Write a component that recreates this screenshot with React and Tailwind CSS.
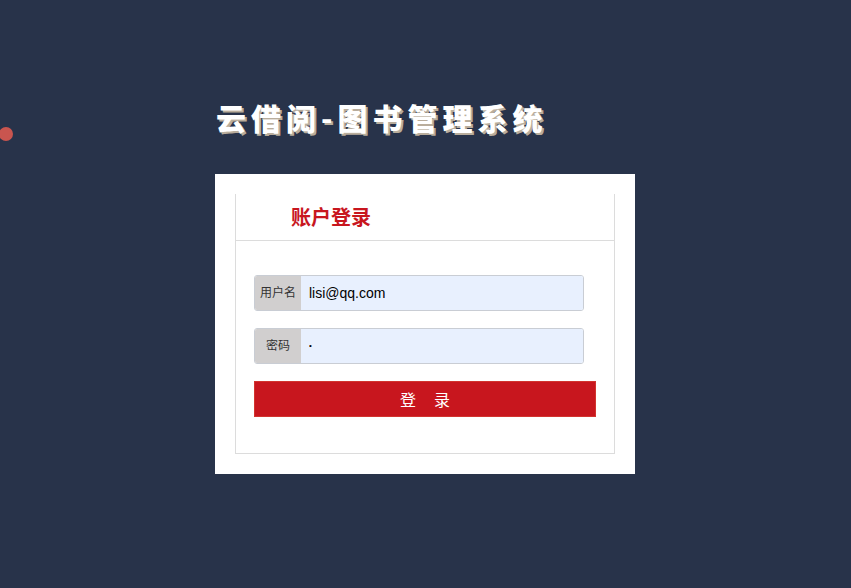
import React from 'react';

const cjk = { fontFamily: '"Noto Sans CJK SC", "Liberation Sans", sans-serif' };

const Field = ({ label, type, value, small }) => (
  <div className="flex h-[36px] w-[330px] rounded-[3px] border border-[#c9cdd4] overflow-hidden">
    <div
      className="w-[46px] shrink-0 bg-[#d1cfcf] text-[12px] text-[#333] flex justify-center pt-[7px]"
      style={cjk}
    >
      {label}
    </div>
    <input
      type={type}
      defaultValue={value}
      className={`flex-1 bg-[#e8f0fe] pl-[8px] text-black outline-none ${small ? 'text-[8px]' : 'text-[14px]'}`}
      style={{ fontFamily: '"Liberation Sans", Arial, sans-serif' }}
    />
  </div>
);

export default function App() {
  return (
    <div className="relative min-h-[588px] w-full bg-[#28334a] flex flex-col items-center pt-[97px]">
      {/* decorative dot on the left edge */}
      <div className="absolute left-[-1px] top-[127px] h-[14px] w-[14px] rounded-full bg-[#c9554f]" />

      <div className="w-[421px]">
        <h1
          className="text-[30px] font-black text-white leading-[40px] tracking-[5px] ml-[1px]"
          style={{ ...cjk, textShadow: '2px 2px 0 #b9ad9c' }}
        >
          云借阅-图书管理系统
        </h1>

        <div className="mt-[37px] w-[420px] h-[300px] bg-white p-[20px]">
          <div className="h-[260px] border-x border-b border-[#dcdcdc]">
            <div className="h-[47px] border-b border-[#dcdcdc] pl-[55px] flex items-center">
              <span className="text-[20px] font-bold text-[#c8161e]" style={cjk}>
                账户登录
              </span>
            </div>

            <div className="pl-[18px] pt-[34px] flex flex-col gap-[17px]">
              <Field label="用户名" type="text" value="lisi@qq.com" />
              <Field label="密码" type="password" value="1" small />
              <button
                className="h-[36px] w-[342px] bg-[#c8161e] border border-[#d2342f] text-white text-[16px] flex items-center justify-center gap-[18px]"
                style={cjk}
              >
                <span>登</span>
                <span>录</span>
              </button>
            </div>
          </div>
        </div>
      </div>
    </div>
  );
}
